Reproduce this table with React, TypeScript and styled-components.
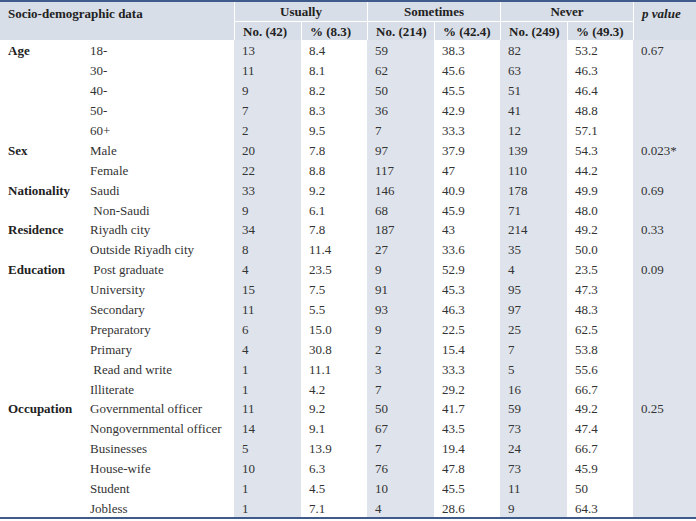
import * as React from 'react'
import styled, { createGlobalStyle } from 'styled-components'

const GlobalStyle = createGlobalStyle`
  html, body {
    margin: 0;
    padding: 0;
    background: #ffffff;
  }
  body {
    font-family: "Liberation Serif", "Times New Roman", serif;
    color: #2b2b2b;
  }
`

const HEAD_BG = '#d8dee8'
const SHADE_BG = '#dfe4ec'
const RULE = '#3f5b8c'

const Table = styled.table`
  width: 696px;
  table-layout: fixed;
  border-collapse: separate;
  border-spacing: 0;
  border-top: 2px solid ${RULE};
  border-bottom: 2px solid ${RULE};
  font-size: 13px;
`

const HeadRow = styled.tr`
  height: 19px;
`

const HeadCell = styled.th<{ $sep?: boolean; $top?: boolean; $align?: string; $italic?: boolean }>`
  background: ${HEAD_BG};
  font-weight: bold;
  font-style: ${({ $italic }) => ($italic ? 'italic' : 'normal')};
  text-align: ${({ $align }) => $align || 'left'};
  vertical-align: ${({ $top }) => ($top ? 'top' : 'middle')};
  padding: ${({ $top }) => ($top ? '3px 8px 0' : '0 8px')};
  border-left: ${({ $sep }) => ($sep ? '1px solid #ffffff' : 'none')};
  color: #222222;
  line-height: 17px;
  white-space: nowrap;
`

const SubHeadCell = styled(HeadCell)`
  border-top: 1px solid #ffffff;
`

const Row = styled.tr`
  height: 19.9px;
`

const Cell = styled.td<{ $shade?: boolean; $bold?: boolean }>`
  background: ${({ $shade }) => ($shade ? SHADE_BG : 'transparent')};
  font-weight: ${({ $bold }) => ($bold ? 'bold' : 'normal')};
  color: ${({ $bold }) => ($bold ? '#222222' : '#333333')};
  padding: 2px 8px 0;
  line-height: 17px;
  white-space: nowrap;
  vertical-align: middle;
`

const GroupCell = styled(Cell)`
  padding-left: 8px;
`

const ItemCell = styled(Cell)`
  padding-left: 6px;
`

type DataRow = {
  group?: string
  item: string
  values: string[]
  p?: string
}

const rows: DataRow[] = [
  { group: 'Age', item: '18-', values: ['13', '8.4', '59', '38.3', '82', '53.2'], p: '0.67' },
  { item: '30-', values: ['11', '8.1', '62', '45.6', '63', '46.3'] },
  { item: '40-', values: ['9', '8.2', '50', '45.5', '51', '46.4'] },
  { item: '50-', values: ['7', '8.3', '36', '42.9', '41', '48.8'] },
  { item: '60+', values: ['2', '9.5', '7', '33.3', '12', '57.1'] },
  { group: 'Sex', item: 'Male', values: ['20', '7.8', '97', '37.9', '139', '54.3'], p: '0.023*' },
  { item: 'Female', values: ['22', '8.8', '117', '47', '110', '44.2'] },
  { group: 'Nationality', item: 'Saudi', values: ['33', '9.2', '146', '40.9', '178', '49.9'], p: '0.69' },
  { item: '\u00a0Non-Saudi', values: ['9', '6.1', '68', '45.9', '71', '48.0'] },
  { group: 'Residence', item: 'Riyadh city', values: ['34', '7.8', '187', '43', '214', '49.2'], p: '0.33' },
  { item: 'Outside Riyadh city', values: ['8', '11.4', '27', '33.6', '35', '50.0'] },
  { group: 'Education', item: '\u00a0Post graduate', values: ['4', '23.5', '9', '52.9', '4', '23.5'], p: '0.09' },
  { item: 'University', values: ['15', '7.5', '91', '45.3', '95', '47.3'] },
  { item: 'Secondary', values: ['11', '5.5', '93', '46.3', '97', '48.3'] },
  { item: 'Preparatory', values: ['6', '15.0', '9', '22.5', '25', '62.5'] },
  { item: 'Primary', values: ['4', '30.8', '2', '15.4', '7', '53.8'] },
  { item: '\u00a0Read and write', values: ['1', '11.1', '3', '33.3', '5', '55.6'] },
  { item: 'Illiterate', values: ['1', '4.2', '7', '29.2', '16', '66.7'] },
  { group: 'Occupation', item: 'Governmental officer', values: ['11', '9.2', '50', '41.7', '59', '49.2'], p: '0.25' },
  { item: 'Nongovernmental officer', values: ['14', '9.1', '67', '43.5', '73', '47.4'] },
  { item: 'Businesses', values: ['5', '13.9', '7', '19.4', '24', '66.7'] },
  { item: 'House-wife', values: ['10', '6.3', '76', '47.8', '73', '45.9'] },
  { item: 'Student', values: ['1', '4.5', '10', '45.5', '11', '50'] },
  { item: 'Jobless', values: ['1', '7.1', '4', '28.6', '9', '64.3'] }
]

const widths = [84, 150, 67, 66, 67, 66, 67, 66, 63]

const groups = [
  { label: 'Usually', n: 'No. (42)', pct: '% (8.3)' },
  { label: 'Sometimes', n: 'No. (214)', pct: '% (42.4)' },
  { label: 'Never', n: 'No. (249)', pct: '% (49.3)' }
]

export default function App() {
  return (
    <>
      <GlobalStyle />
      <Table>
        <colgroup>
          {widths.map((w, i) => (
            <col key={i} style={{ width: w }} />
          ))}
        </colgroup>
        <thead>
          <HeadRow>
            <HeadCell colSpan={2} rowSpan={2} $top>
              Socio-demographic data
            </HeadCell>
            {groups.map((g) => (
              <HeadCell key={g.label} colSpan={2} $sep $align="center">
                {g.label}
              </HeadCell>
            ))}
            <HeadCell rowSpan={2} $sep $top $italic>
              p value
            </HeadCell>
          </HeadRow>
          <HeadRow>
            {groups.map((g) => (
              <React.Fragment key={g.label}>
                <SubHeadCell $sep>{g.n}</SubHeadCell>
                <SubHeadCell $sep>{g.pct}</SubHeadCell>
              </React.Fragment>
            ))}
          </HeadRow>
        </thead>
        <tbody>
          {rows.map((r, i) => (
            <Row key={i}>
              <GroupCell $bold>{r.group || ''}</GroupCell>
              <ItemCell>{r.item}</ItemCell>
              {r.values.map((v, j) => (
                <Cell key={j} $shade={j % 2 === 0}>
                  {v}
                </Cell>
              ))}
              <Cell $shade>{r.p || ''}</Cell>
            </Row>
          ))}
        </tbody>
      </Table>
    </>
  )
}
